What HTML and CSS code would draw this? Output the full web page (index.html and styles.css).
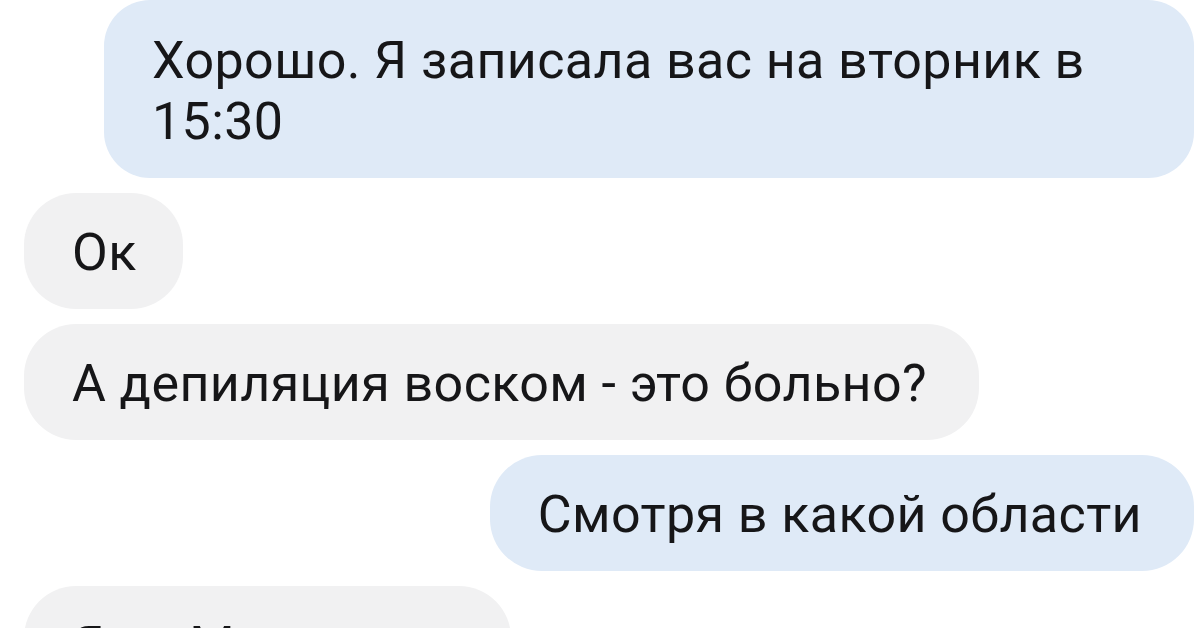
FILE: index.html
```html
<!DOCTYPE html>
<html lang="ru">
<head>
<meta charset="utf-8">
<title>Чат</title>
<link rel="stylesheet" href="styles.css">
</head>
<body>
<div class="chat">
  <div class="msg out first">Хорошо. Я записала вас на вторник в 15:30</div>
  <div class="msg in short">Ок</div>
  <div class="msg in">А депиляция воском - это больно?</div>
  <div class="msg out">Смотря в какой области</div>
  <div class="msg in last">Я из Москвы</div>
</div>
</body>
</html>
```

FILE: styles.css
```css
html, body {
  margin: 0;
  padding: 0;
  background: #ffffff;
}
body {
  width: 1200px;
  height: 628px;
  overflow: hidden;
}
.chat {
  display: flex;
  flex-direction: column;
  gap: 15px;
  padding: 0 6px 0 24px;
  font-family: Roboto, "Noto Sans", sans-serif;
  font-size: 52px;
  letter-spacing: 0.4px;
  line-height: 61px;
  color: #161618;
}
.msg {
  box-sizing: border-box;
  padding: 29px 52px 26px 48px;
  border-radius: 52px;
  max-width: 1090px;
}
.msg.out {
  align-self: flex-end;
  background: #dfeaf7;
}
.msg.in {
  align-self: flex-start;
  background: #f1f1f2;
}
.msg.first {
  border-radius: 46px;
  padding-top: 30px;
}
.msg.short {
  padding-right: 46px;
}
.msg.last {
  width: 487px;
}
```
